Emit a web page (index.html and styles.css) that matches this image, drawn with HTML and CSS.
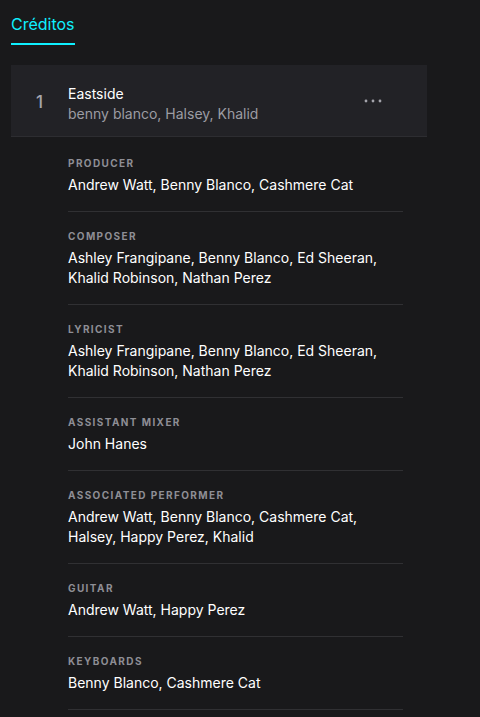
FILE: index.html
```html
<!DOCTYPE html>
<html lang="es">
<head>
<meta charset="utf-8">
<title>Créditos</title>
<link rel="stylesheet" href="styles.css">
</head>
<body>
<div class="page">
  <nav class="tabs">
    <div class="tab active">Créditos</div>
  </nav>

  <section class="track">
    <div class="track-row">
      <div class="track-num">1</div>
      <div class="track-info">
        <div class="track-title">Eastside</div>
        <div class="track-artists">benny blanco, Halsey, Khalid</div>
      </div>
      <button class="more" aria-label="Más opciones">
        <svg width="18" height="4" viewBox="0 0 18 4"><circle cx="2" cy="2" r="1.4"/><circle cx="9" cy="2" r="1.4"/><circle cx="16" cy="2" r="1.4"/></svg>
      </button>
    </div>
  </section>

  <ul class="credits">
    <li class="credit">
      <div class="role">Producer</div>
      <div class="names">Andrew Watt, Benny Blanco, Cashmere Cat</div>
    </li>
    <li class="credit">
      <div class="role">Composer</div>
      <div class="names">Ashley Frangipane, Benny Blanco, Ed Sheeran, Khalid Robinson, Nathan Perez</div>
    </li>
    <li class="credit">
      <div class="role">Lyricist</div>
      <div class="names">Ashley Frangipane, Benny Blanco, Ed Sheeran, Khalid Robinson, Nathan Perez</div>
    </li>
    <li class="credit">
      <div class="role">Assistant Mixer</div>
      <div class="names">John Hanes</div>
    </li>
    <li class="credit">
      <div class="role">Associated Performer</div>
      <div class="names">Andrew Watt, Benny Blanco, Cashmere Cat, Halsey, Happy Perez, Khalid</div>
    </li>
    <li class="credit">
      <div class="role">Guitar</div>
      <div class="names">Andrew Watt, Happy Perez</div>
    </li>
    <li class="credit">
      <div class="role">Keyboards</div>
      <div class="names">Benny Blanco, Cashmere Cat</div>
    </li>
  </ul>
</div>
</body>
</html>
```

FILE: styles.css
```css
html, body {
  margin: 0;
  padding: 0;
  background: #19191b;
}

body {
  font-family: Inter, "Noto Sans", sans-serif;
  color: #ffffff;
  -webkit-font-smoothing: antialiased;
}

.page {
  padding: 0 53px 0 11px;
}

.tabs {
  display: flex;
  padding-top: 14px;
}

.tab {
  font-size: 16px;
  line-height: 20px;
  padding-bottom: 9px;
  border-bottom: 2px solid transparent;
}

.tab.active {
  color: #0ff0ff;
  border-bottom-color: #0ff0ff;
}

.track {
  margin-top: 20px;
  background: #222226;
  border-bottom: 1px solid #2d2d31;
}

.track-row {
  display: flex;
  align-items: center;
  height: 71px;
  padding: 0 45px 0 0;
}

.track-num {
  width: 57px;
  text-align: center;
  font-size: 17px;
  font-weight: 500;
  color: #a6a6ad;
  padding-top: 2px;
}

.track-info {
  flex: 1;
  display: flex;
  flex-direction: column;
  margin-top: 7px;
}

.track-title {
  font-size: 14px;
  line-height: 20px;
  color: #ffffff;
}

.track-artists {
  font-size: 14px;
  line-height: 20px;
  color: #9c9ca3;
}

.more {
  background: none;
  border: 0;
  padding: 0;
  display: flex;
  fill: #a4a4ab;
}

.credits {
  list-style: none;
  margin: 0 24px 0 57px;
  padding: 0;
}

.credit {
  padding: 17px 0 16px;
  border-bottom: 1px solid #303033;
}

.credit:first-child {
  padding-top: 19px;
}

.role {
  font-size: 10px;
  line-height: 14px;
  font-weight: 700;
  letter-spacing: 1.4px;
  text-transform: uppercase;
  color: #8e8e95;
  margin-bottom: 5px;
}

.names {
  font-size: 14px;
  line-height: 20px;
  color: #ffffff;
}
```
